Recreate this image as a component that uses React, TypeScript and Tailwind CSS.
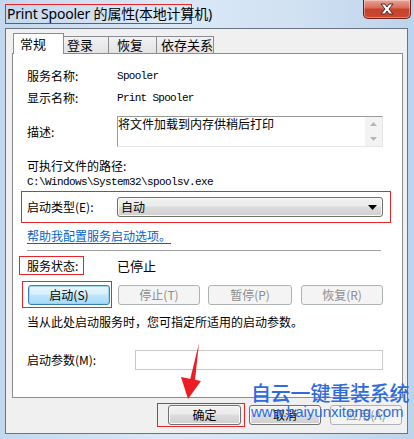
import React from "react";

const cjk = "font-['Noto_Sans_CJK_SC','Noto_Sans',sans-serif]";
const mono = "font-['Liberation_Mono','Noto_Sans_CJK_SC',monospace]";

function WinButton({
  label,
  w,
  variant = "normal",
}: {
  label: string;
  w: string;
  variant?: "normal" | "focus" | "disabled";
}) {
  const base =
    "h-[20px] flex items-center justify-center rounded-[3px] text-[12px] leading-[14px] " +
    cjk +
    " " +
    w;
  if (variant === "focus")
    return (
      <div
        className={
          base +
          " border border-[#3c7fb1] bg-[linear-gradient(#eaf6fd_0%,#d9f0fc_45%,#bee6fd_50%,#a7d9f5_100%)] text-black shadow-[inset_0_0_0_1px_#a0d4f0]"
        }
      >
        {label}
      </div>
    );
  if (variant === "disabled")
    return (
      <div className={base + " border border-[#adb2b5] bg-[#f4f4f4] text-[#8d8d8d]"}>
        {label}
      </div>
    );
  return (
    <div
      className={
        base +
        " border border-[#707070] bg-[linear-gradient(#f2f2f2_0%,#ebebeb_45%,#dddddd_50%,#cfcfcf_100%)] text-black shadow-[inset_0_0_0_1px_#fbfbfb]"
      }
    >
      {label}
    </div>
  );
}

export default function App() {
  return (
    <div className="w-[414px] h-[439px] overflow-hidden relative bg-[linear-gradient(90deg,#c3d8ee_0%,#dbe8f6_40%,#d2e2f3_70%,#bcd3ec_100%)] flex flex-col">
      {/* title bar */}
      <div className="h-[28px] flex justify-between items-start shrink-0">
        <div className="ml-[5px] mt-[4px] h-[20px] w-[187px] border border-[#e8262a] flex items-center pl-[1px]">
          <span className="text-[14px] leading-[18px] text-black whitespace-nowrap font-['Noto_Sans','Noto_Sans_CJK_SC',sans-serif] tracking-[-0.2px]">
            Print Spooler 的属性(本地计算机)
          </span>
        </div>
        <div className="mr-[3px] w-[48px] h-[19px] rounded-b-[5px] border border-t-0 border-[#6e2017] bg-[linear-gradient(#e8a497_0%,#d86b58_45%,#c7402a_50%,#c94a33_100%)] flex items-center justify-center shadow-[inset_0_0_0_1px_rgba(255,255,255,0.35)]">
          <svg width="16" height="12" viewBox="0 0 16 12">
            <path
              d="M2 1 L6 1 L8 4 L10 1 L14 1 L10 6 L14 11 L10 11 L8 8 L6 11 L2 11 L6 6 Z"
              fill="#ffffff"
              stroke="#4a2a28"
              strokeWidth="1"
              strokeLinejoin="round"
            />
          </svg>
        </div>
      </div>

      {/* dialog body */}
      <div className="ml-[5px] w-[403px] h-[406px] border border-[#6b7480] bg-[#f0f0f0] flex flex-col shrink-0">
        {/* tabs */}
        <div className={"mt-[4px] h-[21px] flex items-end pl-[7px] relative z-10 " + cjk}>
          <div className="w-[51px] h-[21px] bg-white border border-b-0 border-[#898c95] flex items-start pt-[2px] pl-[6px] text-[13px] leading-[16px] text-black">
            常规
          </div>
          <div className="w-[45px] h-[17px] mb-[1px] border-t border-r border-[#898c95] bg-[linear-gradient(#f2f2f2,#e3e3e3)] flex items-start pl-[3px] text-[13px] leading-[16px] text-black">
            登录
          </div>
          <div className="w-[48px] h-[17px] mb-[1px] border-t border-r border-[#898c95] bg-[linear-gradient(#f2f2f2,#e3e3e3)] flex items-start pl-[8px] text-[13px] leading-[16px] text-black">
            恢复
          </div>
          <div className="w-[57px] h-[17px] mb-[1px] border-t border-r border-[#898c95] bg-[linear-gradient(#f2f2f2,#e3e3e3)] flex items-start pl-[4px] text-[13px] leading-[16px] text-black">
            依存关系
          </div>
        </div>

        {/* panel */}
        <div className={"-mt-px ml-[6px] w-[391px] h-[345px] bg-white border border-[#898c95] flex flex-col text-[12px] text-black " + cjk}>
          {/* 服务名称 */}
          <div className="mt-[14px] h-[16px] flex items-center">
            <span className="ml-[14px] w-[90px] leading-[16px]">服务名称:</span>
            <span className={mono + " text-[11px] tracking-[-0.7px] leading-[16px]"}>Spooler</span>
          </div>
          <div className="mt-[6px] h-[16px] flex items-center">
            <span className="ml-[14px] w-[90px] leading-[16px]">显示名称:</span>
            <span className={mono + " text-[11px] tracking-[-0.7px] leading-[16px] whitespace-pre"}>Print Spooler</span>
          </div>
          {/* 描述 */}
          <div className="mt-[10px] h-[31px] flex items-center">
            <span className="ml-[14px] w-[90px] leading-[16px]">描述:</span>
            <div className="w-[266px] h-[31px] flex border-t border-l border-[#9a9a9a] border-r border-b border-r-[#e5e5e5] border-b-[#e5e5e5] bg-white">
              <div className="flex-1 text-[12px] leading-[14px]">将文件加载到内存供稍后打印</div>
              <div className="w-[17px] bg-[#f3f3f3] flex flex-col items-center justify-between py-[5px]">
                <svg width="7" height="4" viewBox="0 0 7 4">
                  <path d="M0 4 L3.5 0 L7 4 Z" fill="#b5b5b5" />
                </svg>
                <svg width="7" height="4" viewBox="0 0 7 4">
                  <path d="M0 0 L3.5 4 L7 0 Z" fill="#b5b5b5" />
                </svg>
              </div>
            </div>
          </div>
          {/* path */}
          <div className="mt-[11px] h-[16px] flex items-center">
            <span className="ml-[14px] leading-[16px]">可执行文件的路径:</span>
          </div>
          <div className="h-[16px] flex items-center">
            <span className={"ml-[14px] leading-[16px] text-[11px] tracking-[-0.6px] " + mono}>
              C:\Windows\System32\spoolsv.exe
            </span>
          </div>
          {/* 启动类型 red box */}
          <div className="mt-[1px] ml-[8px] w-[370px] h-[32px] border border-[#e8262a] flex items-center">
            <span className="ml-[5px] w-[90px] leading-[16px]">启动类型(E):</span>
            <div className="w-[266px] h-[20px] rounded-[3px] border border-[#707070] bg-[linear-gradient(#f2f2f2_0%,#ebebeb_45%,#dddddd_50%,#cfcfcf_100%)] shadow-[inset_0_0_0_1px_#fbfbfb] flex items-center justify-between px-[3px]">
              <span className="leading-[16px] text-[12px]">自动</span>
              <svg width="9" height="5" viewBox="0 0 9 5" className="mr-[2px]">
                <path d="M0 0 L9 0 L4.5 5 Z" fill="#000" />
              </svg>
            </div>
          </div>
          {/* link */}
          <div className="mt-[5px] h-[16px] flex items-center">
            <span className="ml-[14px] leading-[16px] text-[#0066cc] underline underline-offset-[2px]">
              帮助我配置服务启动选项。
            </span>
          </div>
          {/* separator */}
          <div className="mt-[6px] ml-[14px] w-[354px] h-px bg-[#a0a0a0]" />
          {/* status */}
          <div className="mt-[5px] h-[19px] flex items-center">
            <div className="ml-[6px] w-[65px] h-[19px] border border-[#e8262a] flex items-center">
              <span className="ml-[7px] leading-[16px] whitespace-nowrap">服务状态:</span>
            </div>
            <span className="ml-[33px] leading-[16px] text-[13px]">已停止</span>
          </div>
          {/* buttons */}
          <div className="mt-[6px] h-[27px] flex items-center">
            <div className="ml-[9px] w-[90px] h-[27px] border border-[#e8262a] flex items-center pl-[5px]">
              <WinButton label="启动(S)" w="w-[82px]" variant="focus" />
            </div>
            <div className="ml-[6px]">
              <WinButton label="停止(T)" w="w-[82px]" variant="disabled" />
            </div>
            <div className="ml-[8px]">
              <WinButton label="暂停(P)" w="w-[84px]" variant="disabled" />
            </div>
            <div className="ml-[9px]">
              <WinButton label="恢复(R)" w="w-[82px]" variant="disabled" />
            </div>
          </div>
          {/* hint */}
          <div className="mt-[6px] h-[16px] flex items-center">
            <span className="ml-[14px] leading-[16px]">当从此处启动服务时，您可指定所适用的启动参数。</span>
          </div>
          {/* params */}
          <div className="mt-[20px] h-[20px] flex items-center">
            <span className="ml-[14px] w-[108px] leading-[16px]">启动参数(M):</span>
            <div className="w-[248px] h-[20px] border border-[#c9c9c9] bg-white" />
          </div>
        </div>

        {/* bottom buttons */}
        <div className="mt-[5px] h-[24px] flex items-center justify-end pr-[5px]">
          <div className="w-[88px] h-[24px] border border-[#e8262a] flex items-center pl-[10px]">
            <WinButton label="确定" w="w-[73px]" />
          </div>
          <div className="ml-[4px]">
            <WinButton label="取消" w="w-[72px]" />
          </div>
          <div className="ml-[9px]">
            <WinButton label="应用(A)" w="w-[72px]" variant="disabled" />
          </div>
        </div>
      </div>

      {/* red arrow annotation */}
      <svg className="absolute left-0 top-0 pointer-events-none" width="414" height="439" viewBox="0 0 414 439">
        <path d="M199 343 L195 380 L190 380 Z" fill="#ec1c24" />
        <path d="M181 377 L201 381 L188 399 Z" fill="#ec1c24" />
      </svg>

      {/* watermark */}
      <div className="absolute left-[251px] top-[381px] pointer-events-none flex flex-col">
        <span className="text-[20px] leading-[24px] text-[#2f6bdc] font-['Noto_Sans_CJK_SC',sans-serif] font-medium tracking-[-0.2px] whitespace-nowrap">
          自云一键重装系统
        </span>
        <span className="-mt-[2px] text-[15px] leading-[18px] text-[#2f6bdc] font-['Liberation_Sans',sans-serif] whitespace-nowrap">
          www.baiyunxitong.com
        </span>
      </div>
    </div>
  );
}
